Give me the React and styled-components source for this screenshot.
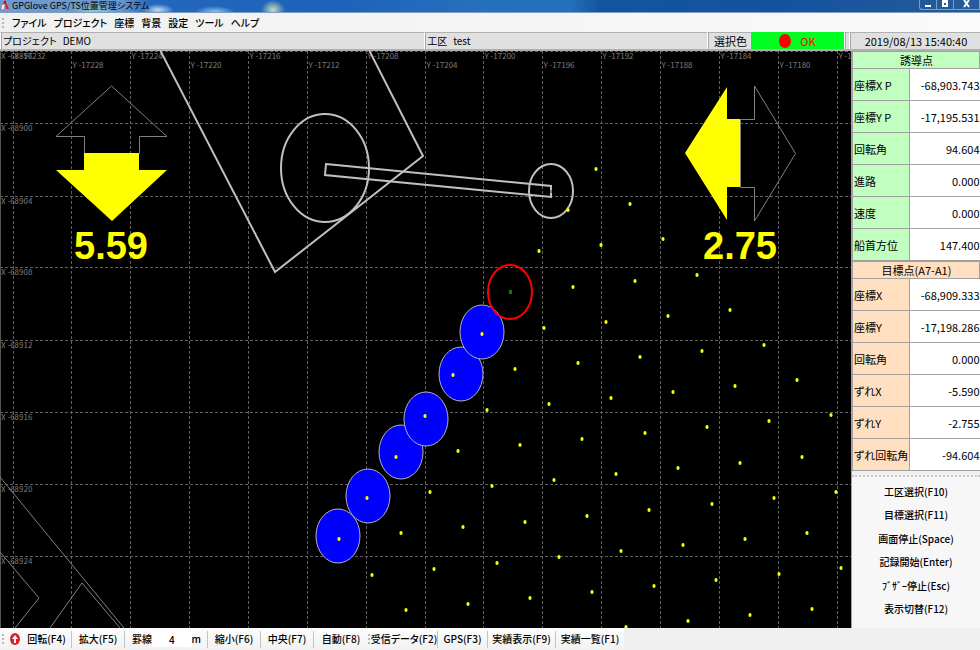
import React                          from 'react'
import styled, { createGlobalStyle }  from 'styled-components'

const menus = ['ファイル', 'プロジェクト', '座標', '背景', '設定', 'ツール', 'ヘルプ']

const guideRows = [
  ['座標X P', '-68,903.743'],
  ['座標Y P', '-17,195.531'],
  ['回転角', '94.604'],
  ['進路', '0.000'],
  ['速度', '0.000'],
  ['船首方位', '147.400'],
]

const targetRows = [
  ['座標X', '-68,909.333'],
  ['座標Y', '-17,198.286'],
  ['回転角', '0.000'],
  ['ずれX', '-5.590'],
  ['ずれY', '-2.755'],
  ['ずれ回転角', '-94.604'],
]

const commands = [
  '工区選択(F10)',
  '目標選択(F11)',
  '画面停止(Space)',
  '記録開始(Enter)',
  'ﾌﾞｻﾞｰ停止(Esc)',
  '表示切替(F12)',
]

// chart geometry, y starts below the status bar
const TOP = 51
const gridX = Array.from({ length: 15 }, (_, i) => Math.round(13.5 + i * 58.87) - 0.5)
const gridY = [51.5, 123.5, 196.5, 267.5, 340.5, 412.5, 484.5, 556.5]

const piles = []
for (let i = 0; i < 10; i++) {
  for (let j = 0; j < 11; j++) {
    const x = Math.round(596.3 - 28.6 * i + 33.5 * j)
    const y = Math.round(169 + 41.15 * i + 35.2 * j)
    if (x < 850 && y < 628 && !(i === 3 && j === 0)) piles.push([x, y])
  }
}

const donePiles = [[338, 536], [368, 496], [401, 452], [426, 419], [461, 374], [482, 332]]

const Chart = () => {
  return (
    <ChartSvg viewBox={`0 ${TOP} 851 577`} role="img" aria-label="位置図">
      <rect x="0" y={TOP} width="851" height="577" fill="#000" />
      <g stroke="#606060" strokeDasharray="3 2" shapeRendering="crispEdges">
        {gridX.map(x => <line key={x} x1={x} x2={x} y1={TOP} y2="628" />)}
        {gridY.map(y => <line key={y} x1="0" x2="851" y1={y} y2={y} />)}
      </g>
      <path d={`M0.5 ${TOP}V628`} stroke="#555" />
      <GridLabels>
        {gridX.map((x, i) => (
          <text key={x} x={x + 1} y={i % 2 ? 68 : 59}>Y {-17232 + i * 4}</text>
        ))}
        {gridY.map((y, i) => (
          <text key={y} x="1" y={y + 7}>X {-68896 - i * 4}</text>
        ))}
      </GridLabels>

      <g fill="none" stroke="#808080">
        <path d="M0 477L124 628M0 552L39 598L15 628M50 628L82 583L120 628" />
        <path d="M111.5 86L167 136.5H139.5V153.5H84.5V136.5H56Z" />
        <path d="M740.5 119.5H754.5V86L795.5 153.5L754.5 221V187.5H740.5Z" />
      </g>

      {donePiles.map(([x, y]) => (
        <ellipse key={x} cx={x} cy={y} rx="22" ry="27" fill="#0000ff" stroke="#b4b4b4" />
      ))}

      <g fill="none" stroke="#c0c0c0" strokeWidth="2">
        <path d="M160 50L275 272L423 156L369 50" />
        <ellipse cx="325" cy="168" rx="44" ry="54" />
        <ellipse cx="551" cy="191" rx="22" ry="27" />
        <path d="M326 164L551 186V197L325 175Z" />
      </g>
      <ellipse cx="510" cy="292" rx="22" ry="27" fill="none" stroke="#ff0000" strokeWidth="2" />

      <g fill="#ffff00">
        {piles.map(([x, y]) => (
          <ellipse key={`${x}-${y}`} cx={x} cy={y} rx="1.6" ry="2" />
        ))}
        <path d="M84 153H139V170H167L112 221L56 170H84Z" />
        <path d="M685 153L727 87V119H740V187H727V220Z" />
      </g>
      <rect x="509" y="290" width="3" height="4" fill="#008000" />
      <rect x="550" y="190" width="2" height="3" fill="#5c8a5c" />

      <Offset x="111" y="259">5.59</Offset>
      <Offset x="740" y="259">2.75</Offset>
    </ChartSvg>
  )
}

const DataTable = ({ title, rows, color }) => {
  return (
    <Table $color={color}>
      <thead>
        <tr><th colSpan="2" scope="colgroup">{title}</th></tr>
      </thead>
      <tbody>
        {rows.map(([label, value]) => (
          <tr key={label}>
            <th scope="row">{label}</th>
            <td>{value}</td>
          </tr>
        ))}
      </tbody>
    </Table>
  )
}

const App = () => {
  return (
    <Window>
      <GlobalStyle />
      <TitleBar>
        <svg width="10" height="11" viewBox="0 0 10 11" aria-hidden="true">
          <path d="M5 0L9 9H6L5 5L3 10H0Z" fill="#d8262c" />
          <path d="M2 5L5 4L4 9L1 10Z" fill="#f4e6e8" />
          <path d="M4 1L6 1L5 4Z" fill="#5b2030" />
        </svg>
        <Caption>GPGlove GPS/TS位置管理システム</Caption>
        <WindowButtons>
          <WindowButton type="button" aria-label="最小化">
            <svg width="8" height="8" viewBox="0 0 8 8"><path d="M1 5H7V7H1Z" fill="#fff" /></svg>
          </WindowButton>
          <WindowButton type="button" aria-label="元に戻す">
            <svg width="8" height="8" viewBox="0 0 8 8">
              <path d="M1 0H7V7H1ZM3 3V5H5V3Z" fill="#fff" fillRule="evenodd" />
            </svg>
          </WindowButton>
          <WindowButton type="button" aria-label="閉じる" $wide>
            <svg width="8" height="8" viewBox="0 0 8 8">
              <path d="M1 0L6 7M6 0L1 7" stroke="#fff" strokeWidth="2" />
            </svg>
          </WindowButton>
        </WindowButtons>
      </TitleBar>

      <MenuBar>
        <Grip />
        {menus.map(label => <MenuButton key={label} type="button">{label}</MenuButton>)}
      </MenuBar>

      <StatusBar>
        <StatusCell><span>プロジェクト</span><span>DEMO</span></StatusCell>
        <StatusCell><span>工区</span><span>test</span></StatusCell>
        <StatusCell $center>選択色</StatusCell>
        <OkCell>
          <svg width="12" height="14" viewBox="0 0 12 14" aria-hidden="true">
            <ellipse cx="6" cy="7" rx="6" ry="7" fill="#ff0000" />
          </svg>
          <span>OK</span>
        </OkCell>
        <StatusCell />
        <StatusCell $center><time>2019/08/13 15:40:40</time></StatusCell>
      </StatusBar>

      <Main>
        <Chart />
        <SidePanel>
          <DataTable title="誘導点" rows={guideRows} color="#c0ffc0" />
          <DataTable title="目標点(A7-A1)" rows={targetRows} color="#ffdfbf" />
          <Commands>
            {commands.map(label => (
              <CommandButton key={label} type="button">{label}</CommandButton>
            ))}
          </Commands>
        </SidePanel>
      </Main>

      <BottomBar>
        <ToolGroup>
          <Grip />
          <ToolButton type="button" $width={67}>
            <svg width="10" height="12" viewBox="0 0 10 12" aria-hidden="true">
              <ellipse cx="5" cy="6" rx="5" ry="6" fill="#e31b1b" />
              <path d="M5 2L8 6H6V10H4V6H2Z" fill="#fff" />
            </svg>
            回転(F4)
          </ToolButton>
          <ToolButton type="button" $width={53}>拡大(F5)</ToolButton>
          <GridField>
            <label htmlFor="pitch">罫線</label>
            <input id="pitch" type="text" defaultValue="4" />
            <span>m</span>
          </GridField>
          <ToolButton type="button" $width={53}>縮小(F6)</ToolButton>
          <ToolButton type="button" $width={53}>中央(F7)</ToolButton>
          <ToolButton type="button" $width={54} $last>自動(F8)</ToolButton>
          <Grip />
          <ToolButton type="button" $width={67}>受信データ(F2)</ToolButton>
          <ToolButton type="button" $width={50}>GPS(F3)</ToolButton>
          <ToolButton type="button" $width={68}>実績表示(F9)</ToolButton>
          <ToolButton type="button" $width={68} $last>実績一覧(F1)</ToolButton>
        </ToolGroup>
      </BottomBar>
    </Window>
  )
}

const GlobalStyle = createGlobalStyle`
  * {
    box-sizing:     border-box;
  }
  body {
    margin:         0;
    background:     #f0f0f0;
    color:          #000;
    font-family:    "Noto Sans CJK JP", sans-serif;
    font-size:      11px;
    line-height:    14px;
    font-feature-settings: "palt";
  }
  button, input {
    margin:         0;
    padding:        0;
    border:         0;
    background:     none;
    color:          inherit;
    font:           inherit;
    font-feature-settings: inherit;
    white-space:    nowrap;
  }
`

const Window = styled.div`
  display:          flex;
  flex-direction:   column;
  min-height:       100vh;
`

const TitleBar = styled.header`
  display:          flex;
  align-items:      flex-start;
  height:           13px;
  border-bottom:    1px solid #7f9dc0;
  background:
    radial-gradient(ellipse 22px 8px at 94px 12px, #8fd0c8 0%, transparent 100%),
    radial-gradient(ellipse 16px 6px at 158px 10px, #c4dcf4 0%, transparent 100%),
    radial-gradient(ellipse 20px 6px at 215px 12px, #8cc8f0 0%, transparent 100%),
    radial-gradient(ellipse 12px 10px at 273px 10px, #c8e0b8 0%, transparent 100%),
    linear-gradient(90deg, #6f9bcf 0, #6b98d0 120px, #2468bc 150px, #1c62ba 330px,
      #2670bc 480px, #2470bc 570px, #12559f 600px, #1452a0 780px, #265c98 100%);
`

const Caption = styled.h1`
  flex:             1;
  margin:           0 0 0 2px;
  font-size:        9px;
  font-weight:      400;
  line-height:      12px;
  white-space:      nowrap;
`

const WindowButtons = styled.div`
  display:          flex;
  height:           10px;
  border:           1px solid #7d9dc2;
  border-width:     0 0 1px 1px;
  border-radius:    0 0 0 3px;
`

const WindowButton = styled.button`
  display:          flex;
  align-items:      flex-start;
  justify-content:  center;
  width:            ${({ $wide }) => ($wide ? 26 : 17)}px;
  border-right:     1px solid #7d9dc2;
`

const MenuBar = styled.nav`
  display:          flex;
  align-items:      center;
  gap:              7px;
  height:           19px;
  padding-left:     2px;
  background:       linear-gradient(90deg, #f0f0f0, #fafafa);
`

const Grip = styled.span`
  flex:             none;
  align-self:       center;
  width:            3px;
  height:           10px;
  border-left:      2px dotted #b8b8b8;
`

const MenuButton = styled.button`
  flex:             none;
  font-size:        10px;
  font-weight:      500;
`

const StatusBar = styled.div`
  display:          grid;
  grid-template-columns: 3fr 2fr 44px 93px 5px 131px;
  height:           19px;
  border-bottom:    2px solid #b0b0b0;
  background:       #e0e0e0;
`

const StatusCell = styled.div`
  display:          flex;
  align-items:      center;
  justify-content:  ${({ $center }) => ($center ? 'center' : 'flex-start')};
  gap:              6px;
  padding-left:     2px;
  border-top:       1px solid #b0b0b0;
  border-left:      1px solid #fff;
  box-shadow:       inset 1px 0 #a8a8a8;
  font-size:        ${({ $center }) => ($center ? 11 : 10)}px;
  white-space:      nowrap;
`

const OkCell = styled.div`
  display:          flex;
  align-items:      center;
  justify-content:  center;
  gap:              9px;
  background:       #00ff20;
  color:            #ff0000;
`

const Main = styled.main`
  display:          grid;
  grid-template-columns: minmax(0, 1fr) 129px;
`

const ChartSvg = styled.svg`
  display:          block;
  width:            100%;
  height:           auto;
`

const GridLabels = styled.g`
  fill:             #7c7c7c;
  font-size:        8px;
`

const Offset = styled.text`
  fill:             #ffff00;
  font-family:      "Liberation Sans", sans-serif;
  font-size:        38px;
  font-weight:      700;
  text-anchor:      middle;
`

const SidePanel = styled.aside`
  display:          flex;
  flex-direction:   column;
  border-left:      1px solid #a0a0a0;
  background:       #f0f0f0;
`

const Table = styled.table`
  width:            100%;
  border-collapse:  collapse;
  background:       #fff;

  th, td {
    border:         1px solid #a0a0a0;
    padding:        0 0 0 1px;
    font-weight:    400;
    white-space:    nowrap;
  }
  th {
    background:     ${({ $color }) => $color};
    text-align:     left;
  }
  thead th {
    height:         17px;
    text-align:     center;
  }
  tbody th {
    width:          57px;
    height:         32px;
  }
  td {
    border-right:   0;
    text-align:     right;
  }
`

const Commands = styled.div`
  display:          flex;
  flex:             1;
  flex-direction:   column;
  justify-content:  space-between;
  margin-top:       4px;
  padding:          3px 0 7px;
  border-top:       2px dotted #c8c8c8;
  background:       #f7f7f7;
`

const CommandButton = styled.button`
  height:           23px;
  font-size:        10px;
  font-weight:      500;
`

const BottomBar = styled.footer`
  display:          flex;
  flex:             1;
  min-height:       21px;
  background:       #f0f0f0;
`

const ToolGroup = styled.div`
  display:          flex;
  align-items:      center;
  padding-left:     2px;
  background:       linear-gradient(#fcfcfc, #f2f2f2);
  font-size:        10px;
  font-weight:      500;
`

const ToolButton = styled.button`
  display:          flex;
  align-items:      center;
  justify-content:  center;
  gap:              7px;
  width:            ${({ $width }) => $width}px;
  height:           17px;
  border-right:     ${({ $last }) => ($last ? '0' : '1px solid #c4c4c4')};
`

const GridField = styled.div`
  display:          flex;
  align-items:      center;
  width:            83px;
  height:           17px;
  padding:          0 6px 0 7px;
  border-right:     1px solid #c4c4c4;

  input {
    flex:           1;
    min-width:      0;
    height:         16px;
    background:     #fff;
    text-align:     center;
  }
`

export default App
